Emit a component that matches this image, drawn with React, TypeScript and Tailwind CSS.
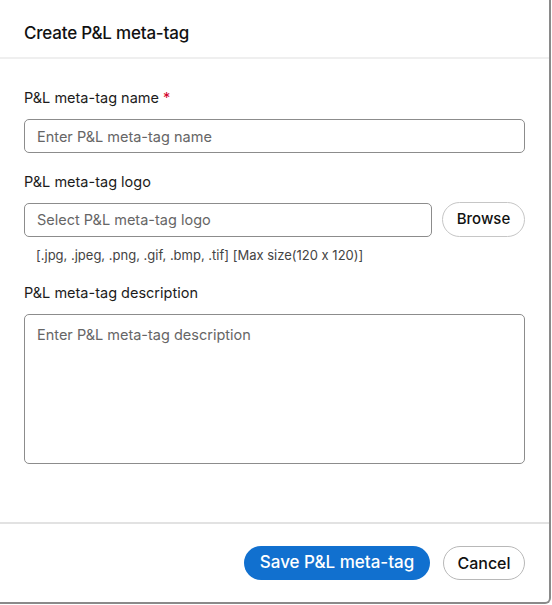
import React from 'react';

export default function App() {
  return (
    <div
      className="w-[552px] h-[605px] bg-white"
      style={{ fontFamily: 'Inter, "Noto Sans", sans-serif', fontFeatureSettings: '"calt" 0' }}
    >
      <div className="w-[551px] h-[604px] flex flex-col border-r-2 border-b-2 border-[#8a8a8a] rounded-br-[6px] bg-white text-[#1c1c1c]">
        {/* header */}
        <div className="h-[59px] shrink-0 flex items-center px-6 pt-[11px] border-b-2 border-[#efefef]">
          <h1 className="text-[17px] font-medium tracking-[-0.2px] text-[#111]">Create P&amp;L meta-tag</h1>
        </div>

        {/* body */}
        <div className="flex-1 px-6 pt-[29px]">
          <label className="block text-[14.5px] leading-5">
            P&amp;L meta-tag name <span className="text-[#d3002d]">*</span>
          </label>
          <input
            placeholder="Enter P&L meta-tag name"
            className="mt-[11px] w-full h-[34px] px-3 rounded-[5px] border border-[#8c8c8c] text-[14.5px] placeholder-[#666] outline-none"
          />

          <label className="block mt-[19px] text-[14.5px] leading-5">P&amp;L meta-tag logo</label>
          <div className="mt-[10px] flex items-center gap-[10px]">
            <input
              placeholder="Select P&L meta-tag logo"
              className="flex-1 h-[34px] px-3 rounded-[5px] border border-[#8c8c8c] text-[14.5px] placeholder-[#666] outline-none"
            />
            <button className="w-[83px] h-[35px] rounded-full border border-[#c6c6c6] text-[15px] font-medium text-[#111]">
              Browse
            </button>
          </div>
          <p className="mt-[10px] pl-3 text-[13px] leading-4 text-[#444]">
            [.jpg, .jpeg, .png, .gif, .bmp, .tif] [Max size(120 x 120)]
          </p>

          <label className="block mt-[20px] text-[14.5px] leading-5">P&amp;L meta-tag description</label>
          <textarea
            placeholder="Enter P&L meta-tag description"
            className="mt-[11px] block w-full h-[150px] px-3 py-[9px] rounded-[5px] border border-[#8c8c8c] text-[14.5px] placeholder-[#666] outline-none resize-none"
          />
        </div>

        {/* footer */}
        <div className="h-[80px] shrink-0 border-t-2 border-[#e2e2e2] flex items-center justify-end gap-[13px] px-6">
          <button className="w-[186px] h-[34px] rounded-full bg-[#1170cf] text-white text-[17px] font-medium">
            Save P&amp;L meta-tag
          </button>
          <button className="w-[82px] h-[34px] rounded-full border border-[#b8b8b8] text-[16px] font-medium text-[#111]">
            Cancel
          </button>
        </div>
      </div>
    </div>
  );
}
